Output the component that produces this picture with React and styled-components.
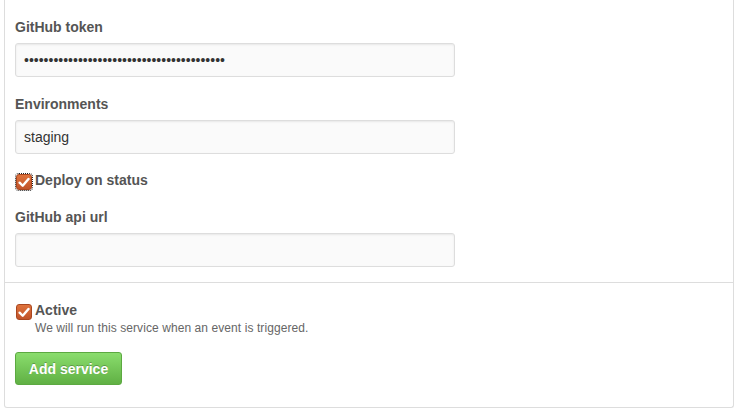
import React from 'react';
import styled, { createGlobalStyle } from 'styled-components';

const GlobalStyle = createGlobalStyle`
  body {
    margin: 0;
    background: #fff;
    font-family: "Liberation Sans", Arial, sans-serif;
  }
`;

const Box = styled.form`
  margin-left: 4px;
  width: 730px;
  box-sizing: border-box;
  border: 1px solid #ddd;
  border-top: none;
  border-radius: 0 0 3px 3px;
  background: #fff;
`;

const Section = styled.div`
  padding: ${(p) => (p.$bottom ? '17px 10px 22px' : '15px 10px')};
  border-top: ${(p) => (p.$bottom ? '1px solid #ddd' : 'none')};
`;

const Field = styled.div`
  margin-bottom: ${(p) => (p.$last ? '0' : '15px')};
`;

const Label = styled.label`
  display: block;
  padding-top: 2px;
  font-size: 14px;
  line-height: 20px;
  font-weight: bold;
  color: #555;
  margin-bottom: 6px;
`;

const Input = styled.input`
  display: block;
  width: 440px;
  height: 34px;
  box-sizing: border-box;
  padding: 0 8px;
  font-family: "Liberation Sans", Arial, sans-serif;
  font-size: 14px;
  color: #333;
  background: #fafafa;
  border: 1px solid #ddd;
  border-radius: 3px;
  box-shadow: inset 0 1px 2px rgba(0, 0, 0, 0.075);
  outline: none;
`;

const CheckRow = styled.div`
  display: flex;
  align-items: flex-start;
  padding-top: ${(p) => (p.$last ? '0' : '1px')};
  margin-bottom: ${(p) => (p.$last ? '0' : '15px')};
`;

const CheckWrap = styled.span`
  flex: none;
  width: 16px;
  height: 16px;
  margin: 4px 3px 0 1px;
  box-sizing: border-box;
  outline: ${(p) => (p.$focused ? '1px dotted #222' : 'none')};
  outline-offset: 0;
  border-radius: 3px;
  background: linear-gradient(#df733c, #c0532a);
  border: 1px solid #a9461f;
  display: flex;
  align-items: center;
  justify-content: center;
`;

const CheckText = styled.div`
  display: flex;
  flex-direction: column;
`;

const CheckLabel = styled.span`
  font-size: 14px;
  line-height: 20px;
  font-weight: bold;
  color: #555;
`;

const Note = styled.span`
  font-size: 12px;
  line-height: 17px;
  letter-spacing: 0.08px;
  color: #666;
`;

const Button = styled.button`
  margin-top: 15px;
  width: 107px;
  height: 33px;
  padding: 0;
  font-family: "Liberation Sans", Arial, sans-serif;
  font-size: 14px;
  font-weight: bold;
  color: #fff;
  text-shadow: 0 -1px 0 rgba(0, 0, 0, 0.25);
  background: linear-gradient(#8add6d, #60b044);
  border: 1px solid #5ca941;
  border-radius: 3px;
  cursor: pointer;
`;

const Check = ({ focused }) => (
  <CheckWrap $focused={focused}>
    <svg width="12" height="11" viewBox="0 0 11 10">
      <path d="M1.5 5.2 L4.3 8 L9.6 1.8" fill="none" stroke="#fff" strokeWidth="2.2" strokeLinecap="round" strokeLinejoin="round" />
    </svg>
  </CheckWrap>
);

const App = () => {
  return (
    <>
      <GlobalStyle />
      <Box onSubmit={(e) => e.preventDefault()}>
        <Section>
          <Field>
            <Label>GitHub token</Label>
            <Input type="password" defaultValue={'x'.repeat(41)} />
          </Field>
          <Field>
            <Label>Environments</Label>
            <Input type="text" defaultValue="staging" />
          </Field>
          <CheckRow>
            <Check focused />
            <CheckLabel>Deploy on status</CheckLabel>
          </CheckRow>
          <Field $last>
            <Label>GitHub api url</Label>
            <Input type="text" defaultValue="" />
          </Field>
        </Section>
        <Section $bottom>
          <CheckRow $last>
            <Check />
            <CheckText>
              <CheckLabel>Active</CheckLabel>
              <Note>We will run this service when an event is triggered.</Note>
            </CheckText>
          </CheckRow>
          <Button type="submit">Add service</Button>
        </Section>
      </Box>
    </>
  );
};

export default App;
